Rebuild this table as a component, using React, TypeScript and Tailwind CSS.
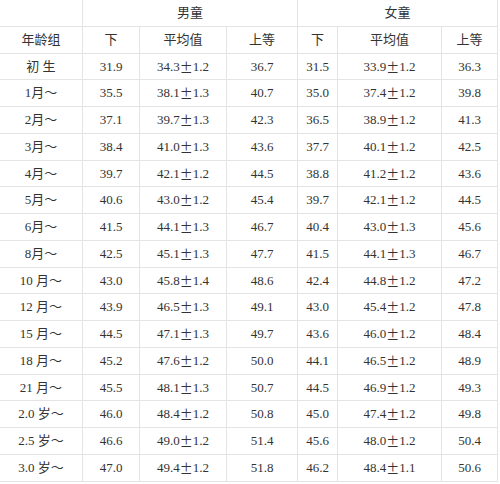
const rows: string[][] = [
  ["初 生", "31.9", "34.3±1.2", "36.7", "31.5", "33.9±1.2", "36.3"],
  ["1月～", "35.5", "38.1±1.3", "40.7", "35.0", "37.4±1.2", "39.8"],
  ["2月～", "37.1", "39.7±1.3", "42.3", "36.5", "38.9±1.2", "41.3"],
  ["3月～", "38.4", "41.0±1.3", "43.6", "37.7", "40.1±1.2", "42.5"],
  ["4月～", "39.7", "42.1±1.2", "44.5", "38.8", "41.2±1.2", "43.6"],
  ["5月～", "40.6", "43.0±1.2", "45.4", "39.7", "42.1±1.2", "44.5"],
  ["6月～", "41.5", "44.1±1.3", "46.7", "40.4", "43.0±1.3", "45.6"],
  ["8月～", "42.5", "45.1±1.3", "47.7", "41.5", "44.1±1.3", "46.7"],
  ["10 月～", "43.0", "45.8±1.4", "48.6", "42.4", "44.8±1.2", "47.2"],
  ["12 月～", "43.9", "46.5±1.3", "49.1", "43.0", "45.4±1.2", "47.8"],
  ["15 月～", "44.5", "47.1±1.3", "49.7", "43.6", "46.0±1.2", "48.4"],
  ["18 月～", "45.2", "47.6±1.2", "50.0", "44.1", "46.5±1.2", "48.9"],
  ["21 月～", "45.5", "48.1±1.3", "50.7", "44.5", "46.9±1.2", "49.3"],
  ["2.0 岁～", "46.0", "48.4±1.2", "50.8", "45.0", "47.4±1.2", "49.8"],
  ["2.5 岁～", "46.6", "49.0±1.2", "51.4", "45.6", "48.0±1.2", "50.4"],
  ["3.0 岁～", "47.0", "49.4±1.2", "51.8", "46.2", "48.4±1.1", "50.6"],
];

const subHeads = ["年龄组", "下", "平均值", "上等", "下", "平均值", "上等"];

const cell =
  "flex items-center justify-center border-r border-b border-[#e4e4e4] h-[26.75px]";

// the ± sign is set in the CJK font, like the original sheet
const Value = ({ v }: { v: string }) => {
  const parts = v.split("±");
  if (parts.length < 2) return <>{v}</>;
  return (
    <>
      {parts[0]}
      <span style={{ fontFamily: '"Noto Sans CJK SC", sans-serif' }}>±</span>
      {parts[1]}
    </>
  );
};

export default function App() {
  return (
    <div
      className="w-[500px] h-[484px] bg-white text-[13px] text-[#333]"
      style={{ fontFamily: '"Liberation Serif", "Noto Sans CJK SC", serif' }}
    >
      <div className="grid w-[498px] grid-cols-[83px_57px_87px_71px_40px_104px_56px]">
        <div className={cell}></div>
        <div className={`${cell} col-span-3`}>男童</div>
        <div className={`${cell} col-span-3`}>女童</div>
        {subHeads.map((h, i) => (
          <div key={"h" + i} className={cell}>
            {h}
          </div>
        ))}
        {rows.map((r, ri) =>
          r.map((v, ci) => (
            <div key={ri + "-" + ci} className={cell}>
              <Value v={v} />
            </div>
          ))
        )}
      </div>
    </div>
  );
}
